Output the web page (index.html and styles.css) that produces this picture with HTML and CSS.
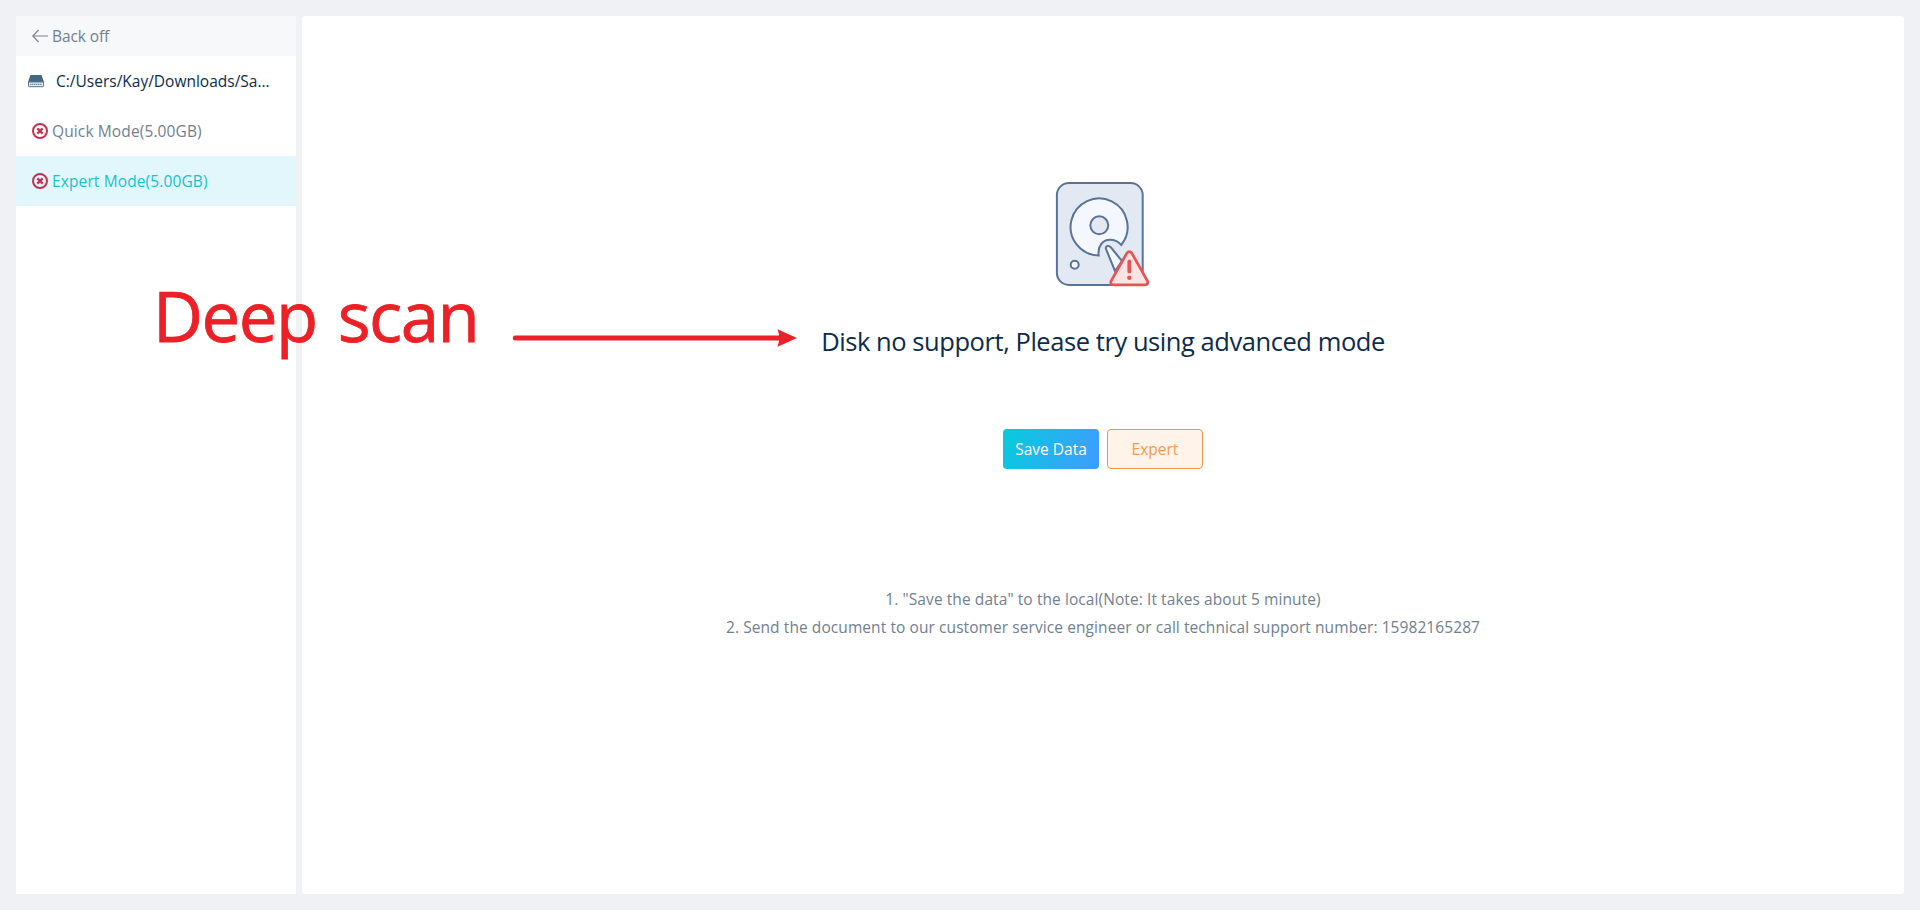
FILE: index.html
```html
<!DOCTYPE html>
<html lang="en">
<head>
    <meta charset="UTF-8">
    <meta name="viewport" content="width=device-width, initial-scale=1.0">
    <title>Disk Scan</title>
    <link rel="stylesheet" href="styles.css">
</head>
<body>
    <div class="layout">
        <!-- Sidebar -->
        <div class="sidebar">
            <div class="back">
                <svg class="icon" viewBox="0 0 16 16" fill="none" stroke="#7d8490" stroke-width="1.2">
                    <path d="M6.600 2 .8 8l5.800 6M.8 8H16"/>
                </svg>
                <span class="back-text">Back off</span>
            </div>
            <div class="path">
                <svg class="icon" viewBox="0 0 16 16">
                    <path d="M3.200 2h9.600q.8 0 1 .6L15.900 9H.1L2.200 2.600Q2.400 2 3.200 2z" fill="#456782"/>
                    <path d="M.5 9h15v3.900q0 .8-.8.8H1.300q-.8 0-.8-.8z" fill="#e3ebf2" stroke="#56768f"/>
                    <path d="M2.200 11.400h11.600" stroke="#56768f" stroke-width="1.200" stroke-dasharray="1.200 .8"/>
                </svg>
                <span class="path-text">C:/Users/Kay/Downloads/Sa...</span>
            </div>
            <div class="mode">
                <svg class="icon" viewBox="0 0 16 16" fill="none" stroke="#c5314f">
                    <circle cx="8" cy="8" r="7" stroke-width="2"/>
                    <path d="M5.400 5.400l5.200 5.200M10.600 5.400l-5.200 5.200" stroke-width="2.300"/>
                </svg>
                <span class="mode-text">Quick Mode(5.00GB)</span>
            </div>
            <div class="mode active">
                <svg class="icon" viewBox="0 0 16 16" fill="none" stroke="#c5314f">
                    <circle cx="8" cy="8" r="7" stroke-width="2"/>
                    <path d="M5.400 5.400l5.200 5.200M10.600 5.400l-5.200 5.200" stroke-width="2.300"/>
                </svg>
                <span class="mode-text">Expert Mode(5.00GB)</span>
            </div>
        </div>

        <!-- Main Content -->
        <div class="main-content">
            <svg class="disk" viewBox="0 0 96 106" fill="none" stroke="#5a7398" stroke-width="2">
                <rect x="1.900" y="2.100" width="85.800" height="101.800" rx="12" fill="#e2e9f2"/>
                <path d="M43.700 74.500A28.500 28.500 0 1 1 66.200 64Q62 58.700 55 58.700C47.500 58.700 42.500 65 43.700 74.500z" fill="#f4f7fd"/>
                <circle cx="44.300" cy="44.300" r="9" fill="#e2e9f2"/>
                <circle cx="19.700" cy="83.700" r="4" fill="#f4f7fd"/>
                <path d="M60 90 51 68Q50.300 65.300 52.700 65Q54.500 64.800 56 66.500L67 80z" fill="#f4f7fd"/>
                <path d="M71.800 72.200Q74.300 69 76.800 72.200L92.400 99.800Q93.800 103.600 90 103.800H58.600Q54.800 103.600 56.200 99.800z" fill="#fde4e4" stroke="#e65455" stroke-width="2.700"/>
                <path d="M74.300 80.500v10" stroke="#e65455" stroke-width="3.800" stroke-linecap="round"/>
                <circle cx="74.300" cy="96.700" r="2.200" fill="#e65455" stroke="none"/>
            </svg>
            <h1 class="title">Disk no support, Please try using advanced mode</h1>
            <div class="buttons">
                <button class="btn btn-save">Save Data</button>
                <button class="btn btn-expert">Expert</button>
            </div>
            <div class="tips">
                <p>1. "Save the data" to the local(Note: It takes about 5 minute)</p>
                <p>2. Send the document to our customer service engineer or call technical support number: 15982165287</p>
            </div>
        </div>
    </div>

    <!-- Annotation over the page -->
    <div class="note">Deep scan</div>
    <svg class="arrow" viewBox="0 0 286 20">
        <path d="M3.300 10H268" stroke="#ec2027" stroke-width="5" stroke-linecap="round"/>
        <path d="M265.500 1.200 285 10l-19.500 8.800Q269 10 265.500 1.200z" fill="#ec2027"/>
    </svg>
</body>
</html>
```
FILE: styles.css
```css
* {
    margin: 0;
    padding: 0;
    box-sizing: border-box;
}

body {
    font-family: "Open Sans", "Noto Sans", sans-serif;
    font-size: 15.5px;
    background: #eff1f5;
    color: #72808f;
}

.layout {
    display: flex;
    gap: 6px;
    height: 100vh;
    padding: 16px;
}

/* Sidebar */
.sidebar {
    width: 280px;
    background: white;
    white-space: nowrap;
}

.icon {
    width: 16px;
    height: 16px;
    flex: none;
}

.back,
.mode,
.path {
    display: flex;
    align-items: center;
    gap: 4px;
    height: 50px;
    padding-left: 16px;
}

.back {
    height: 40px;
    background: #f7f8fa;
}

.back-text {
    letter-spacing: -0.1px;
}

.path {
    gap: 12px;
    padding-left: 12px;
    color: #0c2c4c;
}

.mode-text {
    letter-spacing: 0.12px;
}

.mode.active {
    background: #e1f7fc;
    color: #1cc0cc;
}

/* Main Content */
.main-content {
    flex: 1;
    display: flex;
    flex-direction: column;
    align-items: center;
    padding-top: 165px;
    background: white;
    border-radius: 3px;
    white-space: nowrap;
}

.disk {
    width: 96px;
    height: 106px;
}

.title {
    margin-top: 34px;
    font-size: 25.5px;
    font-weight: normal;
    line-height: 40px;
    letter-spacing: -0.44px;
    color: #0c2c4c;
}

.buttons {
    display: flex;
    gap: 8px;
    margin-top: 68px;
}

.btn {
    width: 96px;
    height: 40px;
    border: none;
    border-radius: 4px;
    font-family: inherit;
    font-size: inherit;
    cursor: pointer;
}

.btn-save {
    background: linear-gradient(110deg, #06ccdc, #409bff);
    color: white;
}

.btn-expert {
    background: #fff3ea;
    border: 1px solid #e89a48;
    color: #f59a4c;
}

.tips {
    margin-top: 116px;
    line-height: 28px;
    letter-spacing: 0.08px;
    text-align: center;
}

/* Annotation */
.note {
    position: absolute;
    left: 153px;
    top: 268px;
    font-size: 69px;
    line-height: 94px;
    letter-spacing: -1.5px;
    word-spacing: 4.5px;
    color: #ec2027;
    -webkit-text-stroke: 0.8px #ec2027;
    white-space: nowrap;
}

.arrow {
    position: absolute;
    left: 512px;
    top: 328px;
    width: 286px;
    height: 20px;
}
```
